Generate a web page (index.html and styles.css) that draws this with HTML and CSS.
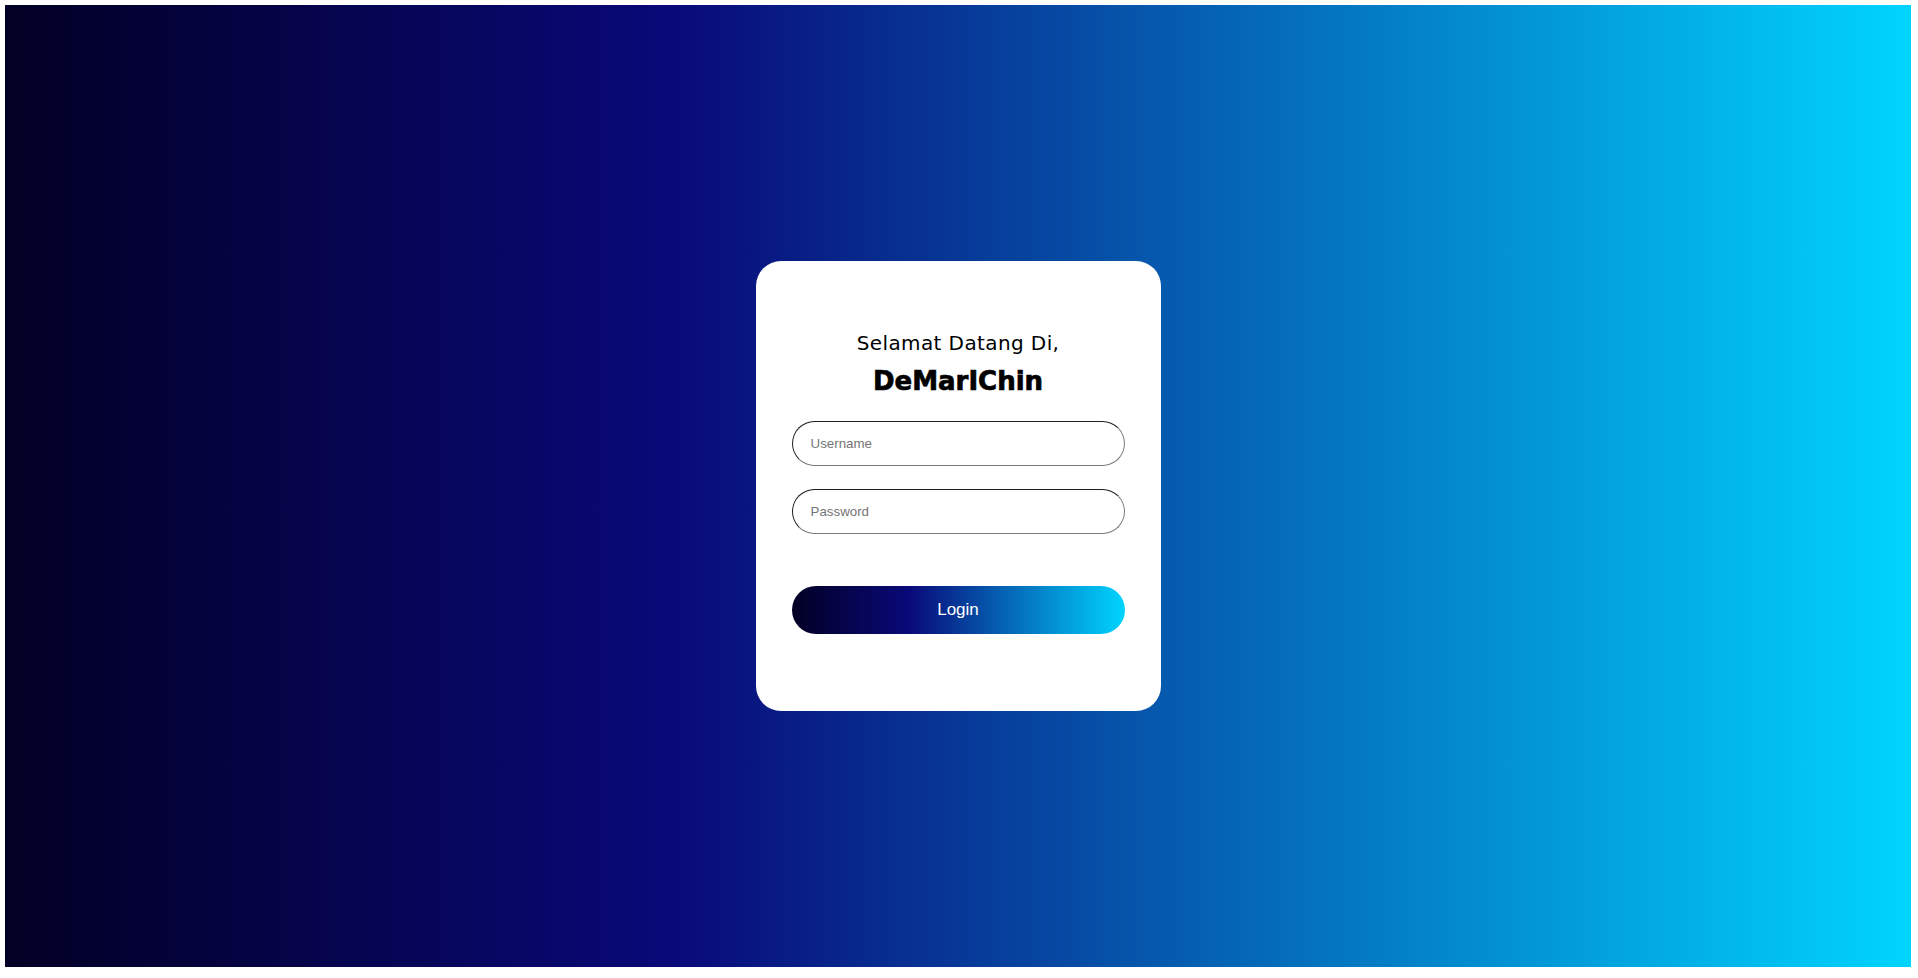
FILE: index.html
```html
<!DOCTYPE html>
<html lang="id">
<head>
<meta charset="utf-8">
<title>DeMarIChin - Login</title>
<link rel="stylesheet" href="styles.css">
</head>
<body>
<div class="page">
  <form class="card">
    <h1 class="welcome">Selamat Datang Di,</h1>
    <h2 class="brand">DeMarIChin</h2>
    <input class="field" type="text" placeholder="Username">
    <input class="field field-second" type="password" placeholder="Password">
    <button class="login" type="button">Login</button>
  </form>
</div>
</body>
</html>
```

FILE: styles.css
```css
html, body {
  margin: 0;
  padding: 0;
  background: #ffffff;
}

body {
  padding: 5px;
}

.page {
  width: 1906px;
  height: 962px;
  background: linear-gradient(90deg, rgb(2, 0, 36) 0%, rgb(9, 9, 121) 35%, rgb(0, 212, 255) 100%);
  display: flex;
  align-items: center;
  justify-content: center;
}

.card {
  box-sizing: border-box;
  width: 405px;
  height: 450px;
  background: #ffffff;
  border-radius: 25px;
  padding: 70px 36px 0;
  display: flex;
  flex-direction: column;
}

.welcome {
  margin: 0;
  font-family: "DejaVu Sans", "Open Sans", sans-serif;
  font-weight: 400;
  font-size: 20px;
  line-height: 24px;
  letter-spacing: 0.4px;
  color: #000;
  text-align: center;
}

.brand {
  margin: 10px 0 0;
  font-family: "DejaVu Sans", "Open Sans", sans-serif;
  font-weight: 700;
  font-size: 26px;
  line-height: 32px;
  color: #000;
  -webkit-text-stroke: 0.7px #000;
  text-align: center;
}

.field {
  box-sizing: border-box;
  width: 333px;
  height: 45px;
  margin: 24px 0 0;
  padding: 0 18px;
  border: 1px solid;
  border-color: #1e1e1e #7a7a7a #7a7a7a #1e1e1e;
  border-radius: 23px;
  background: #fff;
  font-family: "Liberation Sans", Arial, sans-serif;
  font-size: 13.33px;
  color: #000;
  outline: none;
}

.field::placeholder {
  color: #757575;
}

.field-second {
  margin-top: 23px;
}

.login {
  width: 333px;
  height: 48px;
  margin: 52px 0 0;
  border: none;
  border-radius: 24px;
  background: linear-gradient(90deg, rgb(2, 0, 36) 0%, rgb(9, 9, 121) 35%, rgb(0, 212, 255) 100%);
  color: #ffffff;
  font-family: "Liberation Sans", Arial, sans-serif;
  font-size: 17px;
  cursor: pointer;
}
```
